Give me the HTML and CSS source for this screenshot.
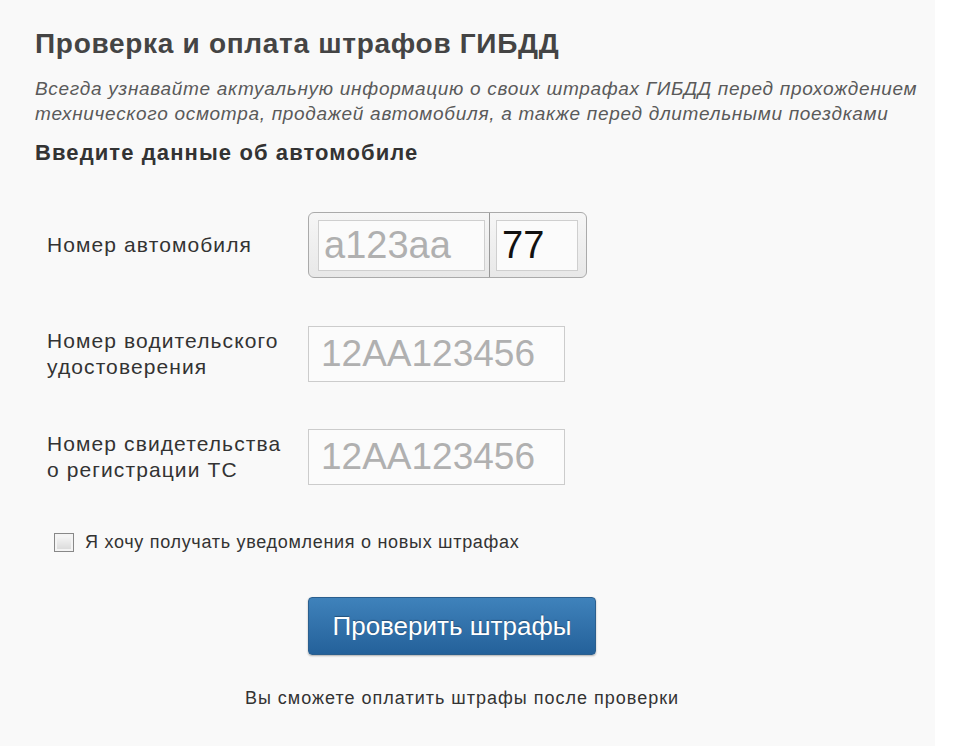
FILE: index.html
```html
<!DOCTYPE html>
<html lang="ru">
<head>
    <meta charset="UTF-8">
    <meta name="viewport" content="width=device-width, initial-scale=1.0">
    <title>Проверка и оплата штрафов ГИБДД</title>
    <link rel="stylesheet" href="styles.css">
</head>
<body>
    <div class="container">
        <h1>Проверка и оплата штрафов ГИБДД</h1>
        <p class="intro">Всегда узнавайте актуальную информацию о своих штрафах ГИБДД перед прохождением технического осмотра, продажей автомобиля, а также перед длительными поездками</p>

        <h2>Введите данные об автомобиле</h2>

        <div class="form">
            <div class="row row-plate">
                <label for="plate">Номер автомобиля</label>
                <div class="plate">
                    <input type="text" id="plate" class="plate-number" placeholder="a123aa">
                    <span class="plate-sep"></span>
                    <input type="text" id="region" class="plate-region" value="77">
                </div>
            </div>

            <div class="row">
                <label for="license">Номер водительского<br>удостоверения</label>
                <input type="text" id="license" class="field" placeholder="12AA123456">
            </div>

            <div class="row">
                <label for="sts">Номер свидетельства<br>о регистрации ТС</label>
                <input type="text" id="sts" class="field" placeholder="12AA123456">
            </div>

            <label class="notify">
                <input type="checkbox" id="notify">
                <span>Я хочу получать уведомления о новых штрафах</span>
            </label>

            <div class="submit">
                <button type="button">Проверить штрафы</button>
            </div>
            <p class="note">Вы сможете оплатить штрафы после проверки</p>
        </div>
    </div>
</body>
</html>
```

FILE: styles.css
```css
html, body {
    margin: 0;
    padding: 0;
}
body {
    font-family: "Liberation Sans", Arial, sans-serif;
    background-color: #fff;
    color: #222;
}
.container {
    width: 935px;
    height: 746px;
    box-sizing: border-box;
    padding: 26px 0 0 35px;
    background-color: #f9f9f9;
}
h1 {
    margin: 0;
    font-size: 28px;
    font-weight: bold;
    letter-spacing: 0.7px;
    color: #444;
    line-height: 36px;
}
.intro {
    width: 885px;
    margin: 14px 0 0;
    font-size: 19px;
    font-style: italic;
    letter-spacing: 0.7px;
    color: #5a5a5a;
    line-height: 25px;
}
h2 {
    margin: 13px 0 0;
    font-size: 22px;
    font-weight: bold;
    letter-spacing: 1.1px;
    color: #333;
    line-height: 28px;
}
.form {
    margin-top: 45px;
}
.row {
    display: flex;
    align-items: center;
    margin-bottom: 47px;
}
.row label {
    width: 261px;
    padding-left: 12px;
    font-size: 21px;
    letter-spacing: 1.1px;
    line-height: 26px;
    color: #333;
}
.plate {
    display: flex;
    align-items: center;
    width: 279px;
    height: 66px;
    box-sizing: border-box;
    padding: 0 8px 0 9px;
    border: 1px solid #aaa;
    border-radius: 6px;
    background: linear-gradient(#f6f6f6, #e8e8e8);
}
.plate input {
    height: 51px;
    box-sizing: border-box;
    border: 1px solid #cfcfcf;
    background-color: #fbfbfb;
    font-family: "Liberation Sans", Arial, sans-serif;
    font-size: 38px;
    padding: 0 5px;
    outline: none;
}
.plate-number {
    width: 167px;
}
.plate-region {
    width: 82px;
    color: #111;
}
.plate-sep {
    width: 2px;
    height: 64px;
    margin: 0 6px 0 4px;
    background-color: #999;
}
.row-plate {
    margin-bottom: 48px;
}
.field {
    width: 257px;
    height: 56px;
    box-sizing: border-box;
    border: 1px solid #ccc;
    background-color: #fbfbfb;
    font-family: "Liberation Sans", Arial, sans-serif;
    font-size: 37px;
    padding: 0 12px;
    outline: none;
}
input::placeholder {
    color: #b0b0b0;
}
.notify {
    display: flex;
    align-items: center;
    margin: 3px 0 0 19px;
    font-size: 18px;
    letter-spacing: 0.7px;
    color: #333;
}
.notify input {
    appearance: none;
    width: 20px;
    height: 19px;
    margin: 0 11px 0 0;
    border: 1px solid #888;
    background: linear-gradient(#fafafa, #d8d8d8);
    box-shadow: inset 0 0 0 2px #f4f4f4;
}
.submit {
    margin: 44px 0 0 273px;
}
.submit button {
    width: 288px;
    height: 58px;
    border: 1px solid #2b5f8e;
    border-radius: 4px;
    background: linear-gradient(#3f82bb, #24619a);
    color: #fff;
    font-family: "Liberation Sans", Arial, sans-serif;
    font-size: 26px;
    text-shadow: 0 -1px 1px rgba(0, 0, 0, 0.3);
    box-shadow: 0 1px 2px rgba(0, 0, 0, 0.3);
    cursor: pointer;
}
.note {
    width: 854px;
    margin: 33px 0 0;
    text-align: center;
    font-size: 18px;
    letter-spacing: 1px;
    color: #333;
}
```
